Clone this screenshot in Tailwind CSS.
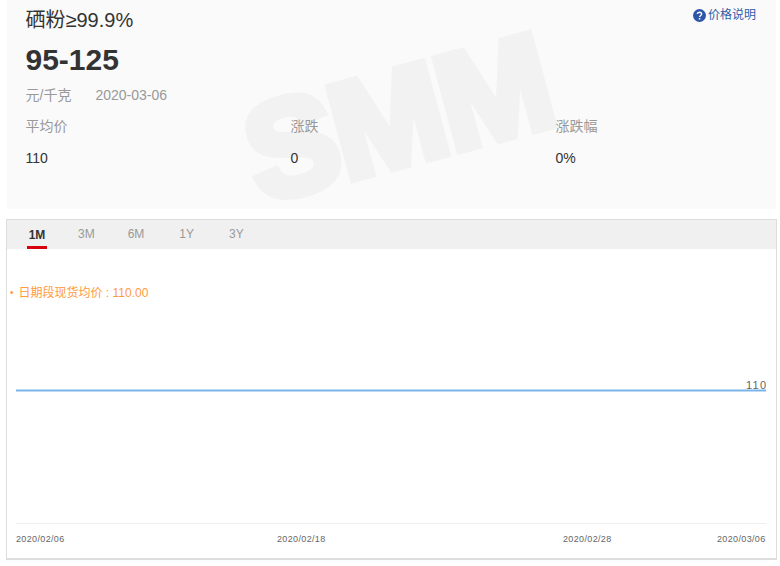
<!DOCTYPE html>
<html lang="zh-CN">
<head>
  <meta charset="UTF-8" />
  <title>硒粉≥99.9%</title>
  <script src="https://cdn.jsdelivr.net/npm/@tailwindcss/browser@4"></script>
</head>
<body class="bg-white font-['Liberation_Sans','Noto_Sans_CJK_SC',sans-serif] h-[566px] overflow-hidden">

  <!-- price card -->
  <section class="relative ml-[7px] w-[769px] h-[209px] bg-[#fafafa] pl-[18.5px] overflow-hidden">
    <span class="absolute left-[236px] top-[50px] -rotate-[15deg] text-[#f2f2f2] text-[136px] leading-[136px] font-bold tracking-[-3px] [-webkit-text-stroke:9px_#f2f2f2] select-none">SMM</span>
    <div class="relative">
      <a class="absolute right-[20px] top-[7px] flex items-center gap-[2px] text-[12px] leading-[16px] text-[#2f5cab]">
        <svg width="13" height="13" viewBox="0 0 13 13">
          <circle cx="6.5" cy="6.5" r="6.5" fill="#2f55a8" />
          <path d="M4.4 5.1c0-1.2 1-1.9 2.1-1.9s2.1.7 2.1 1.8c0 1.5-1.9 1.5-1.9 2.9" fill="none" stroke="#fff" stroke-width="1.4" />
          <rect x="5.8" y="9" width="1.5" height="1.5" fill="#fff" />
        </svg>
        价格说明
      </a>
      <h1 class="pt-[7px] text-[20px] leading-[26px] text-[#333]">硒粉≥99.9%</h1>
      <div class="mt-[9px] text-[30px] leading-[36px] font-bold text-[#333]">95-125</div>
      <div class="mt-[7px] flex gap-6 text-[14px] leading-[20px] text-[#999]">
        <span>元/千克</span>
        <span>2020-03-06</span>
      </div>
      <div class="mt-[11px] grid grid-cols-[265px_265px_1fr] text-[14px] leading-[20px]">
        <div class="text-[#999]">平均价</div>
        <div class="text-[#999]">涨跌</div>
        <div class="text-[#999]">涨跌幅</div>
        <div class="mt-3 text-[#333]">110</div>
        <div class="mt-3 text-[#333]">0</div>
        <div class="mt-3 text-[#333]">0%</div>
      </div>
    </div>
  </section>

  <!-- chart -->
  <section class="ml-[6px] mt-[10px] w-[771px] h-[341px] border border-[#ddd] border-b-2">
    <div class="h-[29px] bg-[#f0f0f0] pl-[20px] flex text-[12px] text-[#999]">
      <div class="w-[20px] h-full flex justify-center items-center font-bold text-[#333] border-b-[3px] border-[#d7000f] pt-[3px]">1M</div>
      <div class="ml-[31px] leading-[29px]">3M</div>
      <div class="ml-[33px] leading-[29px]">6M</div>
      <div class="ml-[35px] leading-[29px]">1Y</div>
      <div class="ml-[35px] leading-[29px]">3Y</div>
    </div>
    <div class="pl-[3px] pt-[36px] h-[54px] text-[12px] leading-[16px] text-[#ff9a3d] flex gap-[5px]">
      <span class="text-[10px]">•</span>
      <span>日期段现货均价 : 110.00</span>
    </div>
    <svg width="769" height="256" viewBox="0 0 769 256" class="block">
      <line x1="9" y1="87.5" x2="759" y2="87.5" stroke="#7cb5ec" stroke-width="2" />
      <line x1="9" y1="220.5" x2="759" y2="220.5" stroke="#eee" stroke-width="1" />
      <text x="739" y="86" font-size="11" letter-spacing="1.3" fill="#666">110</text>
      <g font-size="9" letter-spacing="0.35" fill="#666">
        <text x="9" y="239">2020/02/06</text>
        <text x="270" y="239">2020/02/18</text>
        <text x="556" y="239">2020/02/28</text>
        <text x="710" y="239">2020/03/06</text>
      </g>
    </svg>
  </section>

</body>
</html>
